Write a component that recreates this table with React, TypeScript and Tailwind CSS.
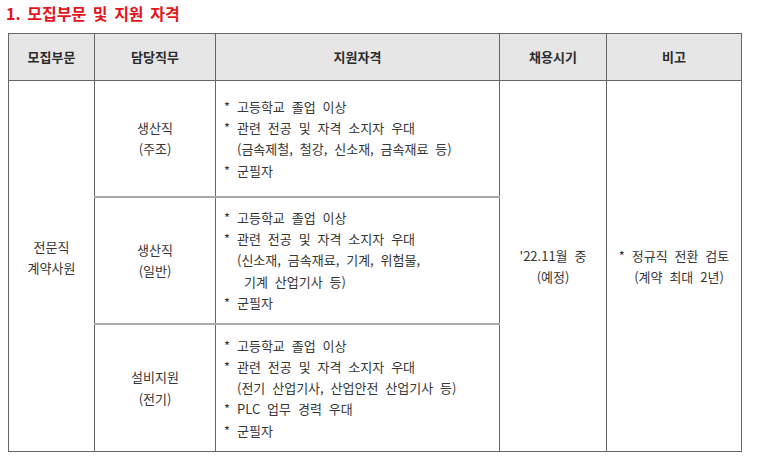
import React from "react";

type Row = {
	job: string[];
	quals: { text: string; indent?: number }[];
};

const rows: Row[] = [
	{
		job: ["생산직", "(주조)"],
		quals: [
			{ text: "* 고등학교 졸업 이상" },
			{ text: "* 관련 전공 및 자격 소지자 우대" },
			{ text: "(금속제철, 철강, 신소재, 금속재료 등)", indent: 1 },
			{ text: "* 군필자" },
		],
	},
	{
		job: ["생산직", "(일반)"],
		quals: [
			{ text: "* 고등학교 졸업 이상" },
			{ text: "* 관련 전공 및 자격 소지자 우대" },
			{ text: "(신소재, 금속재료, 기계, 위험물,", indent: 1 },
			{ text: "기계 산업기사 등)", indent: 2 },
			{ text: "* 군필자" },
		],
	},
	{
		job: ["설비지원", "(전기)"],
		quals: [
			{ text: "* 고등학교 졸업 이상" },
			{ text: "* 관련 전공 및 자격 소지자 우대" },
			{ text: "(전기 산업기사, 산업안전 산업기사 등)", indent: 1 },
			{ text: "* PLC 업무 경력 우대" },
			{ text: "* 군필자" },
		],
	},
];

const heights = ["h-[116px]", "h-[127px]", "h-[128px]"];

export default function App() {
	return (
		<div
			className="w-[768px] h-[472px] bg-white text-[#363636] overflow-hidden"
			style={{ fontFamily: '"Noto Sans CJK KR", "Noto Sans", sans-serif' }}
		>
			<h1 className="pl-[6px] pt-[2px] h-[33px] text-[16px] leading-[22px] font-bold text-[#e5141b] [word-spacing:3px]">
				1. 모집부문 및 지원 자격
			</h1>
			<table className="ml-[8px] table-fixed border-collapse text-[13px] leading-[21.3px] [word-spacing:4px]">
				<colgroup>
					<col className="w-[86px]" />
					<col className="w-[121px]" />
					<col className="w-[284px]" />
					<col className="w-[107px]" />
					<col className="w-[135px]" />
				</colgroup>
				<thead>
					<tr className="h-[47px] bg-[#e6e6e6] font-bold text-[#2b2b2b]">
						<th className="border border-[#666] text-center">모집부문</th>
						<th className="border border-[#666] text-center">담당직무</th>
						<th className="border border-[#666] text-center">지원자격</th>
						<th className="border border-[#666] text-center">채용시기</th>
						<th className="border border-[#666] text-center">비고</th>
					</tr>
				</thead>
				<tbody>
					{rows.map((row, i) => (
						<tr key={i} className={heights[i]}>
							{i === 0 && (
								<td
									rowSpan={3}
									className="border border-[#666] text-center align-middle pb-[18px]"
								>
									<div>전문직</div>
									<div>계약사원</div>
								</td>
							)}
							<td
								className={`border border-[#666] text-center align-middle ${i > 0 ? "border-t-2 border-t-[#a9a9a9]" : ""}`}
							>
								{row.job.map((j) => (
									<div key={j}>{j}</div>
								))}
							</td>
							<td
								className={`border border-[#666] align-middle pl-[8px] ${i > 0 ? "border-t-2 border-t-[#a9a9a9]" : ""}`}
							>
								{row.quals.map((q) => (
									<div
										key={q.text}
										className={
											q.indent === 2
												? "pl-[20px]"
												: q.indent === 1
													? "pl-[13px]"
													: ""
										}
									>
										{q.text}
									</div>
								))}
							</td>
							{i === 0 && (
								<td
									rowSpan={3}
									className="border border-[#666] text-center align-middle"
								>
									<div>'22.11월 중</div>
									<div>(예정)</div>
								</td>
							)}
							{i === 0 && (
								<td
									rowSpan={3}
									className="border border-[#666] text-center align-middle"
								>
									<div>* 정규직 전환 검토</div>
									<div className="pl-[10px]">(계약 최대 2년)</div>
								</td>
							)}
						</tr>
					))}
				</tbody>
			</table>
		</div>
	);
}
